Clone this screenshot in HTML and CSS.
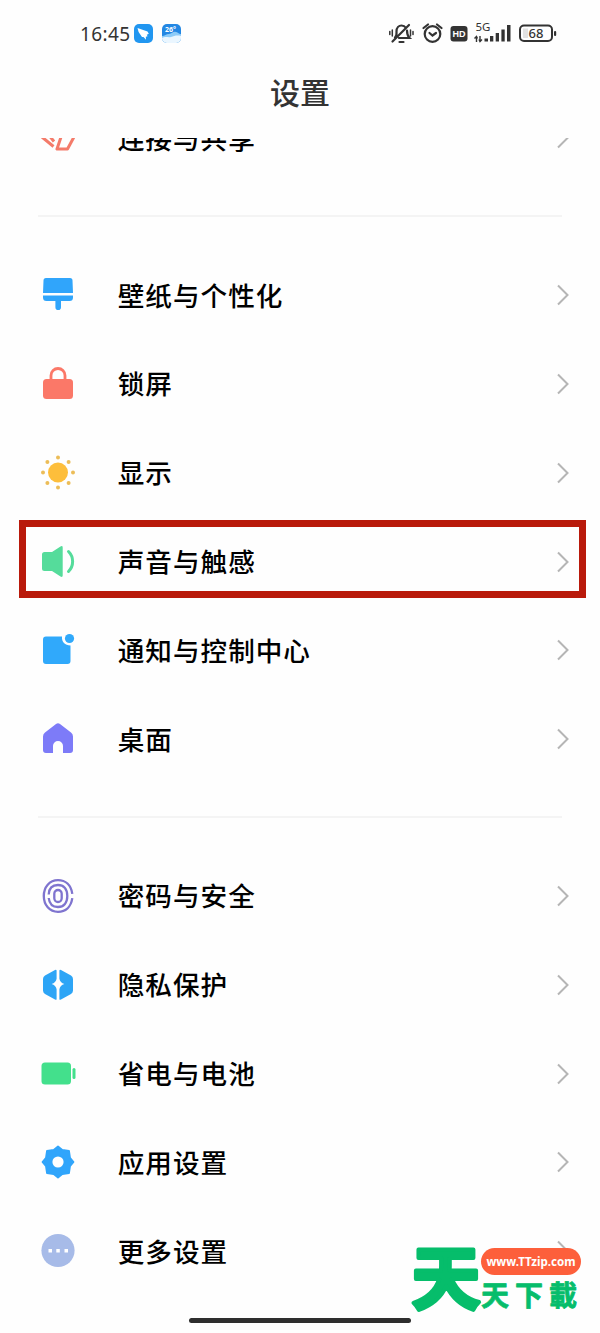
FILE: index.html
```html
<!DOCTYPE html>
<html lang="zh-CN">

<head>
    <meta charset="UTF-8">
    <meta name="viewport" content="width=device-width, initial-scale=1.0">
    <title>设置</title>
    <link rel="stylesheet" href="styles.css">
</head>

<body>
    <header class="status-bar">
        <span class="clock">16:45</span>
        <svg class="app-icon" viewBox="0 0 19 19">
            <rect width="19" height="19" rx="5" fill="#2196f0" />
            <path d="M3.5 4l10 3.6 1.3 2.2-2 1 .8 1.4-1.8.5.2 3-2.500-2.800-1.500.2L4.600 8z" fill="#fff" />
        </svg>
        <svg class="app-icon second" viewBox="0 0 19 19">
            <rect width="19" height="19" rx="5" fill="#2387e3" />
            <path d="M0 12c3 0 4-2 7-2s4-3 7-2 3 2 5 2v4a5 5 0 0 1-5 5H5a5 5 0 0 1-5-5z" fill="#8ccbf8" />
            <path d="M0 14c4-2 6 0 9-1s6-2 10-1v2a5 5 0 0 1-5 5H5a5 5 0 0 1-5-5z" fill="#eaf6ff" />
            <text x="3" y="8" class="temp">26°</text>
        </svg>
        <svg class="status-icons" viewBox="0 0 170 30">
            <g fill="none" stroke="#333" stroke-width="2.200" stroke-linecap="round">
                <!-- muted bell -->
                <path d="M6 18.500c2-1.500 1.500-4 1.500-6 0-4 2.500-6 5-6s3.500 1 4.500 2.500M18 11.500c0 3 0 5 2.500 7.500H10M3.500 22.500L20 6" />
                <path d="M10.500 23h4" />
                <path d="M.8 12.500v3M3.300 11v6M21.500 11v6M24 12.500v3" stroke-width="1.500" />
                <!-- alarm -->
                <circle cx="43.500" cy="15" r="7.800" />
                <path d="M40.500 14l3 2.500 3.500-2.500M34.500 9l4.500-3.500M48 5.500L52.500 9" />
            </g>
            <rect x="61.500" y="7" width="17" height="15.500" rx="3" fill="#333" />
            <text x="63.500" y="18" class="hd">HD</text>
            <text x="86.500" y="12" class="net">5G</text>
            <path d="M87.500 23v-5M85.500 19.500l2-2 1 2M91 17v5M90 20.500l1 2 2-2" fill="none" stroke="#333" stroke-width="1.400" />
            <g fill="#333">
                <rect x="95.500" y="19.500" width="3.500" height="3" />
                <rect x="101" y="17" width="3.300" height="5.500" />
                <rect x="106.700" y="14" width="3.300" height="8.500" />
                <rect x="112.400" y="10.500" width="3.300" height="12" />
                <rect x="118" y="6" width="3.500" height="16.500" />
            </g>
            <rect x="131" y="6.500" width="32" height="15.500" rx="4" fill="none" stroke="#333" stroke-width="2" />
            <rect x="134" y="9.500" width="5" height="9.500" fill="#e2e2e2" />
            <rect x="165" y="12" width="2.200" height="5" rx="1" fill="#333" />
            <text x="139.500" y="19" class="charge">68</text>
        </svg>
    </header>

    <h1 class="title">设置</h1>

    <main class="settings">
        <div class="row">
            <svg class="icon" viewBox="0 0 36 36" fill="none" stroke="#f47b6a" stroke-width="3">
                <path d="M2 17l11.500 9.500M10 16.500l4 5M21.500 15.500l-4.500 13.500h10.500L34.500 16" stroke-linejoin="round" />
            </svg>
            <span class="label">连接与共享</span>
            <svg class="chevron" viewBox="0 0 14 22"><path d="M2 1.500l9.500 9.500L2 20.500" /></svg>
        </div>

        <hr class="divider">

        <div class="row">
            <svg class="icon" viewBox="0 0 36 36" fill="#30a5fb">
                <path d="M6 1h24q2.500 0 2.500 2.500L33 16H3L3.500 3.500Q3.500 1 6 1z" />
                <path d="M3 18.600h30v2q0 3.500-3.500 3.500H21v6.200a2.800 2.800 0 0 1-5.600 0v-6.200H6.500Q3 24.100 3 20.600z" />
            </svg>
            <span class="label">壁纸与个性化</span>
            <svg class="chevron" viewBox="0 0 14 22"><path d="M2 1.500l9.500 9.500L2 20.500" /></svg>
        </div>
        <div class="row">
            <svg class="icon" viewBox="0 0 36 36" fill="#fb7868">
                <rect x="3" y="13" width="30" height="20" rx="3.500" />
                <path d="M11 14V9.500a7 7 0 0 1 14 0V14" fill="none" stroke="#fb7868" stroke-width="2.800" />
            </svg>
            <span class="label">锁屏</span>
            <svg class="chevron" viewBox="0 0 14 22"><path d="M2 1.500l9.500 9.500L2 20.500" /></svg>
        </div>
        <div class="row">
            <svg class="icon" viewBox="0 0 36 36" fill="#fdbe3b">
                <circle cx="18" cy="17.500" r="10" />
                <g fill="#ecbd58">
                    <circle cx="18" cy="2.500" r="2" />
                    <circle cx="18" cy="32.500" r="2" />
                    <circle cx="3" cy="17.500" r="2" />
                    <circle cx="33" cy="17.500" r="2" />
                    <circle cx="7.400" cy="6.900" r="2" />
                    <circle cx="28.600" cy="6.900" r="2" />
                    <circle cx="7.400" cy="28.100" r="2" />
                    <circle cx="28.600" cy="28.100" r="2" />
                </g>
            </svg>
            <span class="label">显示</span>
            <svg class="chevron" viewBox="0 0 14 22"><path d="M2 1.500l9.500 9.500L2 20.500" /></svg>
        </div>
        <div class="row highlighted">
            <svg class="icon" viewBox="0 0 36 36" fill="#55dc9b">
                <path d="M4.500 8H12l8.500-5.600q2.200-1 2.200 1.100v28q0 2.100-2.200 1.100L12 27H4.500Q2 27 2 24.500v-14Q2 8 4.500 8z" />
                <path d="M28.500 7.500c5.500 5.500 5.500 14.500 0 20" fill="none" stroke="#55dc9b" stroke-width="3" stroke-linecap="round" />
            </svg>
            <span class="label">声音与触感</span>
            <svg class="chevron" viewBox="0 0 14 22"><path d="M2 1.500l9.500 9.500L2 20.500" /></svg>
        </div>
        <div class="row">
            <svg class="icon" viewBox="0 0 36 36" fill="#30a9fb">
                <path d="M6 4.500h16c-.5 5.500 3 9 8.500 9V29q0 3-3 3H6q-3 0-3-3V7.500q0-3 3-3z" />
                <circle cx="29.500" cy="6.500" r="4.600" />
            </svg>
            <span class="label">通知与控制中心</span>
            <svg class="chevron" viewBox="0 0 14 22"><path d="M2 1.500l9.500 9.500L2 20.500" /></svg>
        </div>
        <div class="row">
            <svg class="icon" viewBox="0 0 36 36" fill="#7d7bf8">
                <path d="M16 3q2-1.500 4 0l11 8.500q2 1.500 2 4V29q0 3-3 3h-7v-7a5 5 0 0 0-10 0v7H6q-3 0-3-3V15.500q0-2.500 2-4z" />
            </svg>
            <span class="label">桌面</span>
            <svg class="chevron" viewBox="0 0 14 22"><path d="M2 1.500l9.500 9.500L2 20.500" /></svg>
        </div>

        <hr class="divider">

        <div class="row">
            <svg class="icon" viewBox="0 0 36 36" fill="none" stroke="#7f74cf" stroke-width="2.300">
                <path d="M32.300 15.800C31 7 25.500 2.200 18 2.200 9.500 2.200 3.800 9 3.800 18S9.500 33.800 18 33.800c7.500 0 13-4.800 14.300-13.600" />
                <path d="M8.700 16.500C9 10.500 12.500 7 18 7s9.300 4 9.300 11-3.800 11-9.300 11c-5.300 0-8.700-3.500-9.300-9" />
                <rect x="14.300" y="12" width="7.400" height="12" rx="3.700" />
            </svg>
            <span class="label">密码与安全</span>
            <svg class="chevron" viewBox="0 0 14 22"><path d="M2 1.500l9.500 9.500L2 20.500" /></svg>
        </div>
        <div class="row">
            <svg class="icon" viewBox="0 0 36 36" fill="#2da5f6">
                <path d="M16.600 3.500v8.200q-.7 3.900-5 5.300 4.300 1.400 5 5.300v9.900q-.2 1-1.600.4L5 27q-2-1.200-2-3.400V12q0-2.200 2-3.400L15 3q1.400-.600 1.600.5z" />
                <path d="M19.400 3.500v8.200q.7 3.900 5 5.300-4.300 1.400-5 5.300v9.900q.2 1 1.600.4L31 27q2-1.200 2-3.400V12q0-2.200-2-3.400L21 3q-1.400-.600-1.600.5z" />
            </svg>
            <span class="label">隐私保护</span>
            <svg class="chevron" viewBox="0 0 14 22"><path d="M2 1.500l9.500 9.500L2 20.500" /></svg>
        </div>
        <div class="row">
            <svg class="icon" viewBox="0 0 36 36" fill="#43e08c">
                <rect x="1.500" y="6.500" width="29.500" height="22" rx="3.500" />
                <rect x="32.500" y="12" width="3" height="11" rx="1.500" />
            </svg>
            <span class="label">省电与电池</span>
            <svg class="chevron" viewBox="0 0 14 22"><path d="M2 1.500l9.500 9.500L2 20.500" /></svg>
        </div>
        <div class="row">
            <svg class="icon" viewBox="0 0 36 36" fill="#30a5fb">
                <path fill-rule="evenodd" d="M18 2.500l4.300 3.500 6.700 1 1 6.700L33.500 18 30 22.300 29 29l-6.700 1L18 33.500 13.700 30 7 29l-1-6.700L2.500 18 6 13.700 7 7l6.700-1zM18 11.500a6.500 6.500 0 1 0 0 13 6.500 6.500 0 1 0 0-13z" stroke="#30a5fb" stroke-width="1.800" stroke-linejoin="round" />
            </svg>
            <span class="label">应用设置</span>
            <svg class="chevron" viewBox="0 0 14 22"><path d="M2 1.500l9.500 9.500L2 20.500" /></svg>
        </div>
        <div class="row">
            <svg class="icon" viewBox="0 0 36 36">
                <circle cx="18" cy="17.500" r="16.600" fill="#a7bbe8" />
                <path d="M8.500 16h3.500v3.500H8.500zM16.300 16h3.500v3.500h-3.500zM24.500 16H28v3.500h-3.500z" fill="#fff" />
            </svg>
            <span class="label">更多设置</span>
            <svg class="chevron" viewBox="0 0 14 22"><path d="M2 1.500l9.500 9.500L2 20.500" /></svg>
        </div>
    </main>

    <div class="home-bar"></div>

    <svg class="watermark" viewBox="0 0 180 90">
        <text x="1.500" y="74" class="mark-big">天</text>
        <rect x="71" y="18" width="100" height="27" rx="13.500" fill="#fd5f3b" />
        <text x="121" y="36" class="mark-url">www.TTzip.com</text>
        <text x="71 105 139" y="76" class="mark-small">天下載</text>
    </svg>
</body>

</html>
```
FILE: styles.css
```css
*,
*::after {
    box-sizing: border-box;
}

body {
    position: relative;
    display: flex;
    flex-direction: column;
    margin: 0;
    width: 600px;
    height: 1333px;
    overflow: hidden;
    background-color: #fefefe;
    color: #000;
    font-family: "Noto Sans CJK SC", sans-serif;
}

.status-bar {
    display: flex;
    align-items: center;
    height: 67px;
    padding-left: 80px;
}

.clock {
    width: 54px;
    font-family: "Noto Sans", sans-serif;
    font-size: 19px;
    letter-spacing: 0.4px;
    color: #333;
}

.app-icon {
    width: 19px;
    height: 19px;
}

.app-icon.second {
    margin-left: 9px;
}

.temp {
    font: bold 7px "Noto Sans", sans-serif;
    fill: #fff;
}

.status-icons {
    width: 170px;
    height: 30px;
    margin-left: 208px;
}

.hd {
    font: bold 9px "Liberation Sans", sans-serif;
    fill: #fff;
}

.net {
    font: 11.5px "Noto Sans", sans-serif;
    fill: #333;
}

.charge {
    font: 500 13px "Noto Sans", sans-serif;
    fill: #333;
}

.title {
    height: 71px;
    margin: 0;
    font-size: 30px;
    font-weight: 500;
    line-height: 49px;
    text-align: center;
    color: #333;
}

/* the list is scrolled, its first row is cut by the title */
.settings {
    display: flex;
    flex-direction: column;
    height: 1180px;
    overflow: hidden;
}

.row {
    position: relative;
    display: flex;
    flex-shrink: 0;
    align-items: center;
    height: 88.8px;
    padding: 0 30px 0 40.4px;
}

.row:first-child {
    margin-top: -44px;
}

.icon {
    width: 36px;
    height: 36px;
    margin-right: 41.4px;
}

.label {
    flex: 1;
    padding-bottom: 2px;
    font-size: 26.6px;
    font-weight: 500;
    letter-spacing: 1px;
}

.chevron {
    width: 14px;
    height: 22px;
    fill: none;
    stroke: #b5b5b5;
    stroke-width: 2;
}

.divider {
    flex-shrink: 0;
    width: 524px;
    height: 2px;
    margin: 32px 38px 34px;
    border: none;
    background-color: #f4f4f4;
}

.highlighted::after {
    content: "";
    position: absolute;
    top: 3px;
    left: 19px;
    width: 567px;
    height: 78px;
    border: 7px solid #b91a0b;
}

.home-bar {
    width: 222px;
    height: 5px;
    margin: 0 0 0 189px;
    border-radius: 3px;
    background-color: #2e2e2e;
}

.watermark {
    position: absolute;
    left: 410px;
    top: 1230px;
    width: 180px;
    height: 90px;
    overflow: visible;
}

.mark-big,
.mark-small {
    font-weight: 700;
    fill: #06bd6b;
    stroke: #06bd6b;
    stroke-linejoin: round;
}

.mark-big {
    font-size: 69px;
    stroke-width: 4px;
}

.mark-small {
    font-size: 28px;
    stroke-width: 0.8px;
}

.mark-url {
    fill: #fff;
    font: 700 11.6px "Noto Sans", sans-serif;
    text-anchor: middle;
}
```
